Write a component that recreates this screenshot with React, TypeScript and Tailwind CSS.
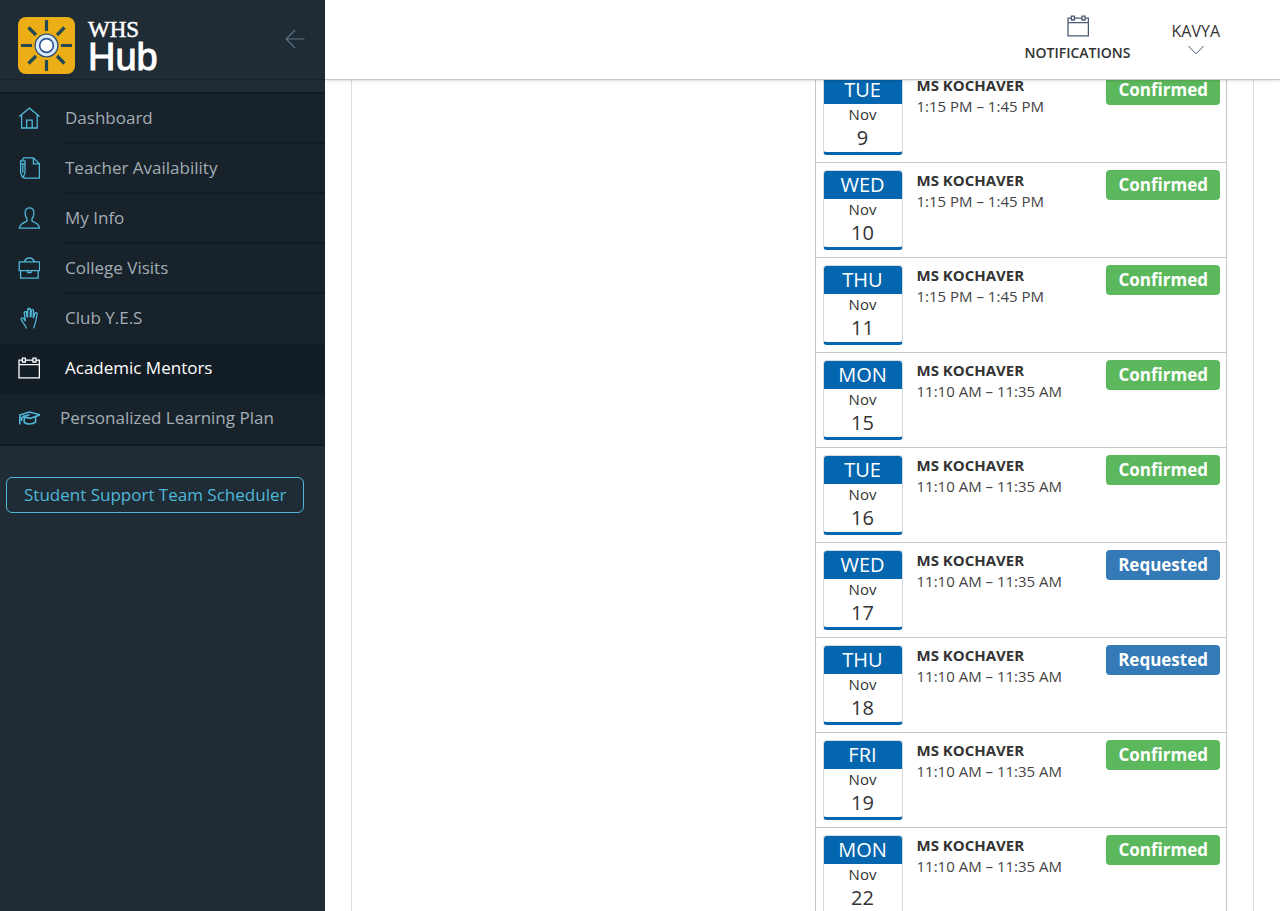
import { ReactNode } from "react";

const Icon = ({ children }: { children: ReactNode }) => (
    <svg
        viewBox="0 0 22 22"
        className="mb-0.5 h-[22px] w-[22px] shrink-0 fill-none stroke-current"
        strokeWidth="1.3"
        aria-hidden="true"
    >
        {children}
    </svg>
);

const HomeIcon = () => (
    <Icon>
        <path d="M1.2 9.6 11.4 1.2 21.6 9.6M3.6 7.8V21H19.2V7.8M8.6 21V13.2H14.2V21" />
    </Icon>
);

const NotesIcon = () => (
    <Icon>
        <path d="M4.4 3.6V2.8L5.8 0.9H15.4L21.4 6.8V21.2H6.2L5 19.6M15.4 0.9V6.8H21.4" />
        <path d="M2.6 3.8H7V15.6L5.4 20H4.2L2.6 15.6ZM2.6 6.8H7M4.8 6.8V15.8" />
    </Icon>
);

const UserIcon = () => (
    <Icon>
        <path d="M9 11.6C7.4 9.8 7 7.4 7.2 5C7.4 2.2 9 0.8 11.5 0.8C14 0.8 15.6 2.2 15.8 5C16 7.4 15.6 9.8 14 11.6V14.2C17.2 15.6 21 16.4 21.4 21.2H1.4C1.8 16.4 5.8 15.6 9 14.2Z" />
    </Icon>
);

const BriefcaseIcon = () => (
    <Icon>
        <path d="M1.2 4.8H21.6V13.6H1.2ZM2.6 13.6V21.2H20.2V13.6M6.4 4.8C7.4 2.2 9 1 11.4 1C13.8 1 15.4 2.2 16.4 4.8M9.8 14V15.6H13V14" />
    </Icon>
);

const HandIcon = () => (
    <Icon>
        <path d="M8.6 21.4C7.2 17.8 4.4 15.4 3.2 12.6C2.6 11 4.6 10.2 5.6 11.6L7.4 14.2L6.2 6.2C6 4.4 8 4 8.5 5.6L9.6 10.6V3C9.6 1.2 12.2 1.2 12.3 3V10.4L13.2 3.8C13.5 2.2 15.5 2.4 15.5 4L15.2 11.2L17 6.6C17.6 5 19.4 5.6 19.1 7.2L17.8 14C17.4 16.6 16.2 18.4 15.8 21.4" />
        <path d="M8.6 4V9.6M9.4 3.2 10.8 1.2 12.8 1.8M13 3.4V10M15.6 4.6V10" />
    </Icon>
);

const CalendarIcon = () => (
    <Icon>
        <path d="M4.4 3.2H1V20.8H21.4V3.2H18M7.4 3.2H15M1 7.6H21.4" />
        <path d="M4.4 1.2H7.4V5H4.4ZM15 1.2H18V5H15Z" />
    </Icon>
);

const GraduationIcon = () => (
    <Icon>
        <path
            strokeWidth="1.6"
            d="M1 8.2 11.4 5 22 7.8 12.2 11.4 4.6 9.6 11.6 7.8M6.2 10.4V15.4C8.4 17.6 14.6 17.6 17.6 15.2V10M1.8 8.8V17.6M3.6 9.8V14"
        />
    </Icon>
);

const menuItems = [
    { label: "Dashboard", icon: <HomeIcon /> },
    { label: "Teacher Availability", icon: <NotesIcon /> },
    { label: "My Info", icon: <UserIcon /> },
    { label: "College Visits", icon: <BriefcaseIcon /> },
    { label: "Club Y.E.S", icon: <HandIcon /> },
    { label: "Academic Mentors", icon: <CalendarIcon />, active: true },
    { label: "Personalized Learning Plan", icon: <GraduationIcon />, tight: true },
];

const morning = "11:10 AM – 11:35 AM";
const afternoon = "1:15 PM – 1:45 PM";

const meetings = [
    { day: "TUE", date: 9, time: afternoon, status: "Confirmed" },
    { day: "WED", date: 10, time: afternoon, status: "Confirmed" },
    { day: "THU", date: 11, time: afternoon, status: "Confirmed" },
    { day: "MON", date: 15, time: morning, status: "Confirmed" },
    { day: "TUE", date: 16, time: morning, status: "Confirmed" },
    { day: "WED", date: 17, time: morning, status: "Requested" },
    { day: "THU", date: 18, time: morning, status: "Requested" },
    { day: "FRI", date: 19, time: morning, status: "Confirmed" },
    { day: "MON", date: 22, time: morning, status: "Confirmed" },
];

const Logo = () => (
    <a href="#" className="flex items-center gap-[13px] text-white">
        <svg viewBox="0 0 57 57" className="h-[57px] w-[57px]" aria-hidden="true">
            <rect width="57" height="57" rx="8" fill="#ebae17" />
            <g stroke="#234a52" strokeWidth="3.2">
                <path d="M28.5 3V14M28.5 43V54M3 28.5H14M43 28.5H54M10.5 10.5L18 18M39 39L46.5 46.5M46.5 10.5L39 18M18 39L10.5 46.5" />
            </g>
            <circle cx="28.5" cy="28.5" r="12" fill="#2f4f76" />
            <circle cx="28.5" cy="28.5" r="9.2" fill="#2f5596" stroke="#dcebfa" strokeWidth="3" />
            <circle cx="28.5" cy="28.5" r="6" fill="#fff" />
        </svg>
        <span className="flex flex-col">
            <span className="font-['Liberation_Serif',serif] text-[23px] leading-6 [-webkit-text-stroke:0.5px_white]">
                WHS
            </span>
            <span className="font-['Liberation_Sans',sans-serif] text-[38px] leading-[30px] [-webkit-text-stroke:1px_white]">
                Hub
            </span>
        </span>
    </a>
);

const Sidebar = () => (
    <aside className="w-[325px] shrink-0 bg-[#1f2c36]">
        <div className="flex h-20 items-center justify-between border-b border-[#19242d] pt-[11px] pr-5 pl-[18px]">
            <Logo />
            <button type="button" aria-label="Collapse menu" className="pb-3 text-[#5c7283]">
                <svg viewBox="0 0 20 20" className="h-5 w-5 fill-none stroke-current" strokeWidth="1.2">
                    <path d="M10 1 1.2 10 10 19M1.2 10H19.5" />
                </svg>
            </button>
        </div>
        <nav className="mt-3 border-y-2 border-[#111b22] bg-[#17222b]">
            {menuItems.map((item, i) => (
                <a
                    key={item.label}
                    href="#"
                    aria-current={item.active ? "page" : undefined}
                    className={`flex h-[50px] items-center pl-[18px] ${
                        item.active ? "bg-[#131d26] text-white" : "text-[#50b7d8]"
                    } ${item.tight ? "gap-5" : "gap-[25px]"}`}
                >
                    {item.icon}
                    <span
                        className={`flex h-full flex-1 items-center border-b-2 text-[17px] ${
                            item.active ? "text-white" : "text-[#a3adb4]"
                        } ${i < 4 ? "border-[#111b22]" : "border-transparent"}`}
                    >
                        {item.label}
                    </span>
                </a>
            ))}
        </nav>
        <a
            href="#"
            className="mt-[31px] ml-1.5 inline-flex h-9 items-center rounded-md border border-[#50b7d8] px-[17px] text-[17px] text-[#50b7d8]"
        >
            Student Support Team Scheduler
        </a>
    </aside>
);

const TopBar = () => (
    <header className="relative z-10 flex h-20 shrink-0 justify-end gap-[41px] border-b border-[#c8c8c8] bg-white pr-[60px] text-[#333] shadow-sm">
        <button type="button" className="flex flex-col items-center pt-[15px]">
            <span className="text-[#4b5a74]">
                <CalendarIcon />
            </span>
            <span className="mt-1 text-[14px] leading-5 font-semibold">NOTIFICATIONS</span>
        </button>
        <button type="button" className="flex flex-col items-center pt-[19px]">
            <span className="text-[16px] leading-6">KAVYA</span>
            <svg viewBox="0 0 16 10" className="mt-0.5 h-[10px] w-4 fill-none stroke-[#4b5a74]" aria-hidden="true">
                <path d="M0.4 1 8 8.8 15.6 1" />
            </svg>
        </button>
    </header>
);

const Meeting = ({ day, date, time, status }: (typeof meetings)[number]) => (
    <li className="flex h-[95px] items-start border-t border-[#c4c6c8] p-[7px] pr-[6px]">
        <div className="h-20 w-20 shrink-0 overflow-hidden rounded border border-b-[3px] border-[#d5dade] border-b-[#0466ae] text-center text-[#333]">
            <div className="bg-[#0466ae] text-[20px] leading-7 text-white">{day}</div>
            <div className="text-[15px] leading-5">Nov</div>
            <div className="text-[20px] leading-7">{date}</div>
        </div>
        <div className="flex-1 pl-[14px] text-[15px] leading-[21px] text-[#444]">
            <p className="font-bold text-[#333]">MS KOCHAVER</p>
            <p>{time}</p>
        </div>
        <span
            className={`rounded px-3 text-[17px] leading-[30px] font-bold text-white ${
                status === "Confirmed" ? "bg-[#5cb85c]" : "bg-[#337ab7]"
            }`}
        >
            {status}
        </span>
    </li>
);

const App = () => {
    return (
        <div className="flex h-screen overflow-hidden bg-white font-['Open_Sans',sans-serif]">
            <Sidebar />
            <div className="flex min-w-0 flex-1 flex-col">
                <TopBar />
                {/* list is scrolled, so its first row starts under the top bar */}
                <main className="-mt-[13px] min-h-0 flex-1 overflow-hidden px-[26px]">
                    <div className="grid grid-cols-2 gap-6 border-x border-[#d9dbdd] px-[26px]">
                        <ul className="col-start-2 border-x border-[#c4c6c8]">
                            {meetings.map((m) => (
                                <Meeting key={m.date} {...m} />
                            ))}
                        </ul>
                    </div>
                </main>
            </div>
        </div>
    );
};

export default App;
